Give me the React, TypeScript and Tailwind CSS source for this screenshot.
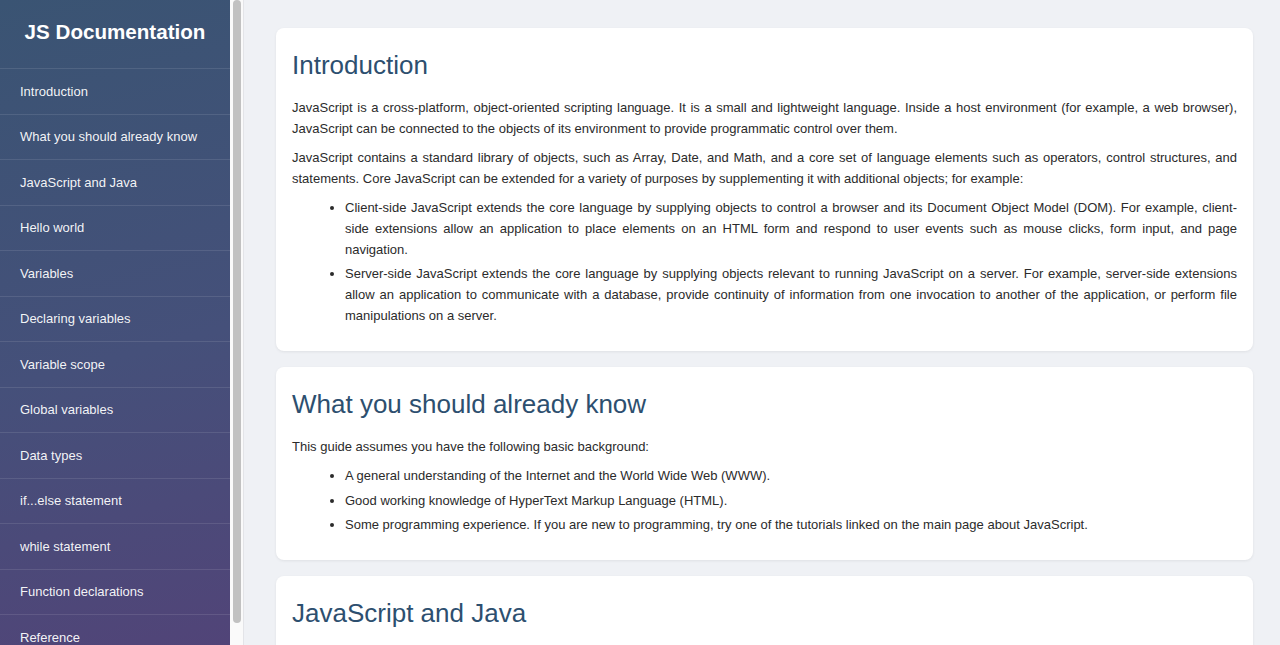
import React from "react";

const NAV_ITEMS = [
  "Introduction",
  "What you should already know",
  "JavaScript and Java",
  "Hello world",
  "Variables",
  "Declaring variables",
  "Variable scope",
  "Global variables",
  "Data types",
  "if...else statement",
  "while statement",
  "Function declarations",
  "Reference",
];

function Section({ title, children }: { title: string; children: React.ReactNode }) {
  return (
    <section className="bg-white rounded-lg shadow-[0_1px_3px_rgba(0,0,0,0.07)] px-4 pt-[22px] pb-4">
      <h2 className="text-[26px] leading-[31px] text-[#2d4f6f] mb-4">{title}</h2>
      {children}
    </section>
  );
}

export default function App() {
  return (
    <div
      className="flex h-screen w-full overflow-hidden bg-[#eff1f5] text-[13px] text-[#2b2b2b]"
      style={{ fontFamily: '"Liberation Sans", Arial, sans-serif' }}
    >
      <aside className="flex shrink-0 h-full">
        <nav className="w-[230px] h-full bg-[linear-gradient(165deg,#3a5473_0%,#45507a_55%,#514478_100%)] text-white">
          <div className="h-[69px] border-b border-white/10 flex justify-center pt-[19px]">
            <h1 className="text-[20.6px] font-bold leading-[26px]">JS Documentation</h1>
          </div>
          <ul>
            {NAV_ITEMS.map((item) => (
              <li
                key={item}
                className="h-[45.5px] flex items-center px-5 border-b border-white/10 text-white/95"
              >
                {item}
              </li>
            ))}
          </ul>
        </nav>
        <div className="w-[14px] h-full bg-[#fafafa] px-[3px] border-r border-[#e3e4e8]">
          <div className="w-[8px] h-[623px] rounded-full bg-[#c1c1c1]" />
        </div>
      </aside>

      <main className="flex-1 h-full overflow-hidden pl-[32px] pr-[27px] pt-[28px] flex flex-col gap-4">
        <Section title="Introduction">
          <p className="text-justify leading-[21px] mb-2">
            JavaScript is a cross-platform, object-oriented scripting language. It is a small and
            lightweight language. Inside a host environment (for example, a web browser), JavaScript
            can be connected to the objects of its environment to provide programmatic control over
            them.
          </p>
          <p className="text-justify leading-[21px] mb-2">
            JavaScript contains a standard library of objects, such as Array, Date, and Math, and a
            core set of language elements such as operators, control structures, and statements. Core
            JavaScript can be extended for a variety of purposes by supplementing it with additional
            objects; for example:
          </p>
          <ul className="list-disc pl-[53px] leading-[21px] mb-[9px]">
            <li className="text-justify mb-[3px]">
              Client-side JavaScript extends the core language by supplying objects to control a
              browser and its Document Object Model (DOM). For example, client-side extensions allow
              an application to place elements on an HTML form and respond to user events such as
              mouse clicks, form input, and page navigation.
            </li>
            <li className="text-justify">
              Server-side JavaScript extends the core language by supplying objects relevant to
              running JavaScript on a server. For example, server-side extensions allow an
              application to communicate with a database, provide continuity of information from one
              invocation to another of the application, or perform file manipulations on a server.
            </li>
          </ul>
        </Section>

        <Section title="What you should already know">
          <p className="leading-[21px] mb-2">This guide assumes you have the following basic background:</p>
          <ul className="list-disc pl-[53px] leading-[21px] flex flex-col gap-[3.5px] mb-[9px]">
            <li>A general understanding of the Internet and the World Wide Web (WWW).</li>
            <li>Good working knowledge of HyperText Markup Language (HTML).</li>
            <li>
              Some programming experience. If you are new to programming, try one of the tutorials
              linked on the main page about JavaScript.
            </li>
          </ul>
        </Section>

        <Section title="JavaScript and Java">
          <p className="text-justify leading-[21px] mb-2">
            JavaScript and Java are similar in some ways but fundamentally different in some others.
            The JavaScript language resembles Java but does not have Java's static typing and strong
            type checking.
          </p>
        </Section>
      </main>
    </div>
  );
}
